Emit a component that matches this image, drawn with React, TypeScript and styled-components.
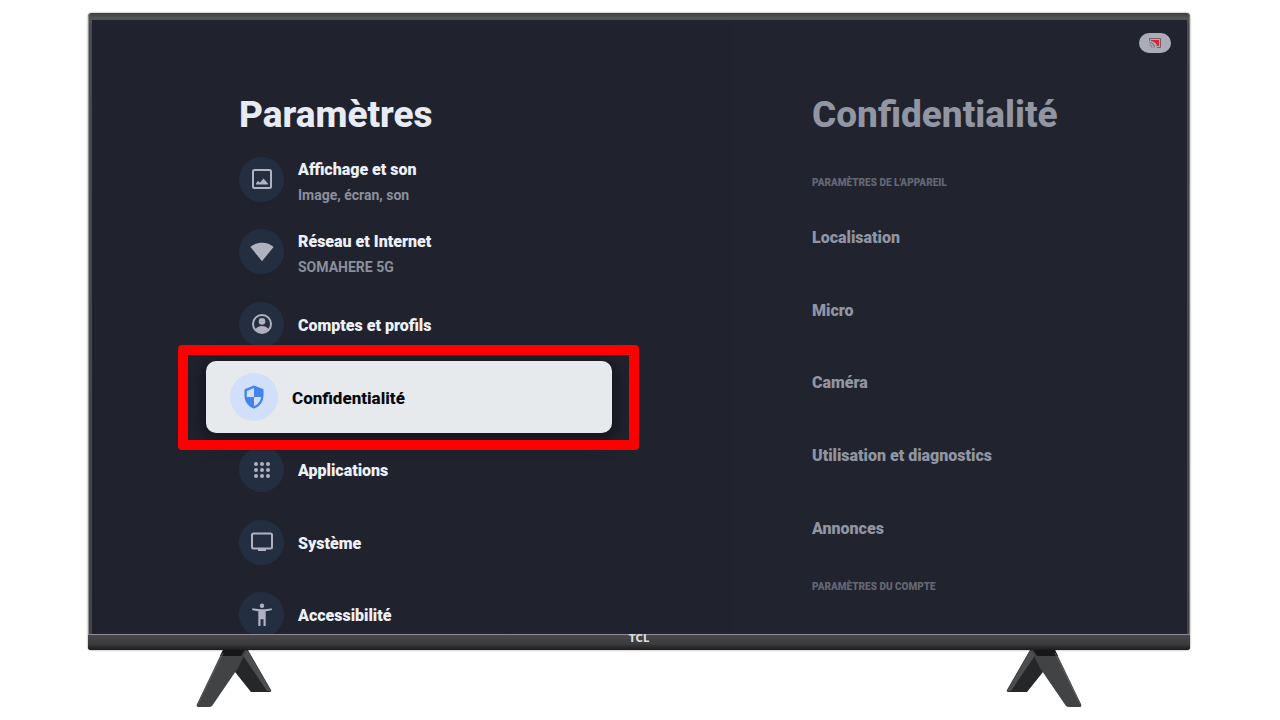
import React from "react";
import styled, { createGlobalStyle, css } from "styled-components";

const GlobalStyle = createGlobalStyle`
  *, *::before, *::after { box-sizing: border-box; }
  body { margin: 0; background: #ffffff; font-family: Roboto, "Liberation Sans", sans-serif; }
  h1, h2, h3, p, ul { margin: 0; padding: 0; }
  ul { list-style: none; }
`;

const Page = styled.div`
  min-height: 100vh;
  padding: 13px 90px 12px 88px;
  overflow: hidden;
`;

const Cabinet = styled.div`
  border-radius: 4px 4px 3px 3px;
  background: #2b2b2d;
  box-shadow: 0 0 2px #77777a;
`;

const Bezel = styled.div`
  padding: 7px 2px 0 3px;
  border-left: 1px solid #8f8f92;
  border-right: 1px solid #77787a;
  border-radius: 4px 4px 0 0;
  background: linear-gradient(#3c3d3e 0, #545656 5px, #4a4b4d 12px, #434446 100%);
`;

const Screen = styled.main`
  position: relative;
  display: grid;
  grid-template-columns: 640fr 455fr;
  height: 614px;
  overflow: hidden;
  background: #20232e;
`;

const Pane = styled.section<{ $side?: boolean }>`
  padding: 69px 0 0 ${(p) => (p.$side ? "80px" : "114px")};
  background: ${(p) => (p.$side ? "#21242f" : "transparent")};
`;

const Title = styled.h1<{ $dim?: boolean }>`
  padding-left: ${(p) => (p.$dim ? "0" : "33px")};
  font-size: 37px;
  line-height: 52px;
  font-weight: 800;
  white-space: nowrap;
  color: ${(p) => (p.$dim ? "#9295a2" : "#e9ebf3")};
`;

const Menu = styled.ul`
  display: grid;
  grid-template-rows: repeat(7, 1fr);
  width: 406px;
  min-height: 508px;
  margin-top: 2px;
`;

const Item = styled.li<{ $active?: boolean }>`
  position: relative;
  z-index: ${(p) => (p.$active ? 1 : 0)};
`;

const Row = styled.button<{ $active?: boolean }>`
  display: flex;
  align-items: center;
  gap: 14px;
  width: 100%;
  height: 100%;
  padding: 0 33px;
  border: 0;
  border-radius: 10px;
  background: transparent;
  color: #eef0f8;
  font: inherit;
  font-size: 16px;
  font-weight: 900;
  text-align: left;
  cursor: pointer;
  ${(p) =>
    p.$active &&
    css`
      padding: 0 24px;
      background: #e7eaed;
      color: #08090c;
      font-size: 17px;
      font-weight: 800;
      box-shadow: 0 4px 16px 4px #15161d;
    `}
`;

const Disc = styled.span<{ $active?: boolean }>`
  display: grid;
  place-items: center;
  flex: none;
  width: ${(p) => (p.$active ? "48px" : "45px")};
  height: ${(p) => (p.$active ? "48px" : "45px")};
  border-radius: 50%;
  background: ${(p) => (p.$active ? "#d2dffa" : "#232f40")};
  color: ${(p) => (p.$active ? "#4384ec" : "#b0b2c0")};
`;

const Labels = styled.span<{ $double?: boolean }>`
  display: flex;
  flex-direction: column;
  gap: 5px;
  padding-top: ${(p) => (p.$double ? "6px" : "3px")};
  white-space: nowrap;
`;

const Name = styled.span`
  line-height: 20px;
`;

const Detail = styled.span`
  font-size: 14px;
  line-height: 20px;
  font-weight: 700;
  color: #8c8f9c;
`;

const Highlight = styled.span`
  position: absolute;
  inset: -16px -27px -17px -28px;
  border: 10px solid #fe0000;
  border-radius: 4px;
  pointer-events: none;
`;

const SectionLabel = styled.h3`
  font-size: 10px;
  line-height: 16px;
  font-weight: 900;
  text-transform: uppercase;
  color: #646773;
`;

const DeviceGroup = styled.div`
  padding-top: 34px;
`;

const Options = styled.ul`
  display: grid;
  grid-template-rows: repeat(5, 1fr);
  height: 363px;
  margin: 11px 0 14px;
`;

const Option = styled.button`
  width: 100%;
  height: 100%;
  padding: 0;
  border: 0;
  background: transparent;
  color: #9194a1;
  font: inherit;
  font-size: 16px;
  line-height: 20px;
  font-weight: 900;
  text-align: left;
  cursor: pointer;
`;

const CastBadge = styled.span`
  position: absolute;
  top: 13px;
  right: 16px;
  display: grid;
  place-items: center;
  width: 32px;
  height: 20px;
  border-radius: 10px;
  background: #aaadb9;
`;

const Chin = styled.div`
  display: flex;
  justify-content: center;
  height: 16px;
  border-top: 1px solid #8d8c94;
  border-radius: 0 0 3px 3px;
  background: linear-gradient(#48474b, #3b3b3d 60%, #1c1c1d);
`;

const Brand = styled.span`
  font-family: "DejaVu Sans", sans-serif;
  font-size: 10px;
  line-height: 8px;
  font-weight: 700;
  color: #dcdcde;
`;

const Stand = styled.div`
  display: flex;
  justify-content: space-between;
  padding: 0 108px;
`;

const Glyph = styled.svg`
  display: block;
`;

const ImageIcon = () => (
  <Glyph width="22" height="22" viewBox="0 0 22 22" fill="none" aria-hidden="true">
    <rect x="2" y="2" width="18" height="18" rx="1.5" stroke="currentColor" strokeWidth="2" />
    <path d="M5 16.500v-1l2-2.700 1.700 1.700 1.300-1 2.500-3 4.500 5v1z" fill="currentColor" />
  </Glyph>
);

const WifiIcon = () => (
  <Glyph width="24" height="20" viewBox="0 0 24 20" aria-hidden="true">
    <path d="M.4 5C3.500 2.300 7.500.8 12 .8S20.500 2.300 23.600 5L12 19.200z" fill="currentColor" />
  </Glyph>
);

const AccountIcon = () => (
  <Glyph width="20" height="20" viewBox="0 0 20 20" fill="none" aria-hidden="true">
    <circle cx="10" cy="10" r="9" stroke="currentColor" strokeWidth="2" />
    <circle cx="10" cy="7.400" r="3.300" fill="currentColor" />
    <path d="M3.500 15c1.400-2 3.900-3 6.500-3s5.100 1 6.500 3c-1.500 2.200-3.900 3.500-6.500 3.500S5 17.200 3.500 15z" fill="currentColor" />
  </Glyph>
);

const ShieldIcon = () => (
  <Glyph width="20" height="24" viewBox="0 0 20 24" aria-hidden="true">
    <path
      fillRule="evenodd"
      d="M10 .5L.5 4.300v6.500c0 5.800 4 11.200 9.500 12.700 5.500-1.500 9.500-6.900 9.500-12.700V4.300zM10 3v9h7.200c-.6 4.200-3.500 7.800-7.200 9V12H2.800V5.900z"
      fill="currentColor"
    />
  </Glyph>
);

const AppsIcon = () => (
  <Glyph width="18" height="18" viewBox="0 0 18 18" fill="currentColor" aria-hidden="true">
    {[3, 9, 15].map((y) => [3, 9, 15].map((x) => <circle key={`${x}-${y}`} cx={x} cy={y} r="2" />))}
  </Glyph>
);

const TvIcon = () => (
  <Glyph width="22" height="20" viewBox="0 0 22 20" fill="none" aria-hidden="true">
    <rect x="1" y="1.500" width="20" height="15" rx="1.500" stroke="currentColor" strokeWidth="2" />
    <path d="M7 16.500h8v2.500H7z" fill="currentColor" />
  </Glyph>
);

const AccessIcon = () => (
  <Glyph width="20" height="24" viewBox="0 0 20 24" fill="currentColor" aria-hidden="true">
    <circle cx="10" cy="2.800" r="2.200" />
    <path d="M.5 5.200C6 6.600 14 6.600 19.500 5.200L20 7.100c-2 .5-4.300.9-6.300 1.100V23h-2.200v-6.800h-3V23H6.300V8.200C4.300 8 2 7.600 0 7.100z" />
  </Glyph>
);

const CastIcon = () => (
  <Glyph width="12" height="10" viewBox="0 0 12 10" role="img" aria-label="Cast">
    <path d="M.5 3V.5h11v9H8" fill="none" stroke="#7b5a62" />
    <path d="M2 2h8v6H8C7.500 5.500 5.500 3.500 2 3z" fill="#dc2437" />
    <path d="M.5 4.500c2.800 0 5 2.200 5 5M.5 7c1.400 0 2.500 1.100 2.500 2.500" fill="none" stroke="#75636c" />
  </Glyph>
);

const Foot = ({ flip = false }: { flip?: boolean }) => (
  <Glyph width="76" height="58" viewBox="0 0 76 58" aria-hidden="true">
    <g transform={flip ? "translate(76 0) scale(-1 1)" : undefined}>
      <path d="M28 0h24l23 40q1 2-2 2H55L39 22z" fill="#262728" />
      <path d="M43 1h9l23 40h-4L48 7z" fill="#4d4e4f" />
      <path d="M27 0h24l-9 18L16 56q-1 1-3 1H2q-2 0-1-3z" fill="#424344" />
      <path d="M27 0h22l-4 6H24z" fill="#161718" />
      <path d="M2 54L27 3" stroke="#5c5d5e" fill="none" />
    </g>
  </Glyph>
);

const items = [
  { name: "Affichage et son", detail: "Image, écran, son", icon: <ImageIcon /> },
  { name: "Réseau et Internet", detail: "SOMAHERE 5G", icon: <WifiIcon /> },
  { name: "Comptes et profils", icon: <AccountIcon /> },
  { name: "Confidentialité", icon: <ShieldIcon />, active: true },
  { name: "Applications", icon: <AppsIcon /> },
  { name: "Système", icon: <TvIcon /> },
  { name: "Accessibilité", icon: <AccessIcon /> },
];

const options = ["Localisation", "Micro", "Caméra", "Utilisation et diagnostics", "Annonces"];

export default function App() {
  return (
    <Page>
      <GlobalStyle />
      <Cabinet>
        <Bezel>
          <Screen>
            <Pane>
              <Title>Paramètres</Title>
              <Menu>
                {items.map((item) => (
                  <Item key={item.name} $active={item.active}>
                    <Row type="button" $active={item.active}>
                      <Disc $active={item.active}>{item.icon}</Disc>
                      <Labels $double={Boolean(item.detail)}>
                        <Name>{item.name}</Name>
                        {item.detail && <Detail>{item.detail}</Detail>}
                      </Labels>
                    </Row>
                    {item.active && <Highlight />}
                  </Item>
                ))}
              </Menu>
            </Pane>
            <Pane $side>
              <Title as="h2" $dim>Confidentialité</Title>
              <DeviceGroup>
                <SectionLabel>Paramètres de l'appareil</SectionLabel>
                <Options>
                  {options.map((label) => (
                    <li key={label}>
                      <Option type="button">{label}</Option>
                    </li>
                  ))}
                </Options>
              </DeviceGroup>
              <SectionLabel>Paramètres du compte</SectionLabel>
            </Pane>
            <CastBadge>
              <CastIcon />
            </CastBadge>
          </Screen>
        </Bezel>
        <Chin>
          <Brand>TCL</Brand>
        </Chin>
      </Cabinet>
      <Stand>
        <Foot />
        <Foot flip />
      </Stand>
    </Page>
  );
}
